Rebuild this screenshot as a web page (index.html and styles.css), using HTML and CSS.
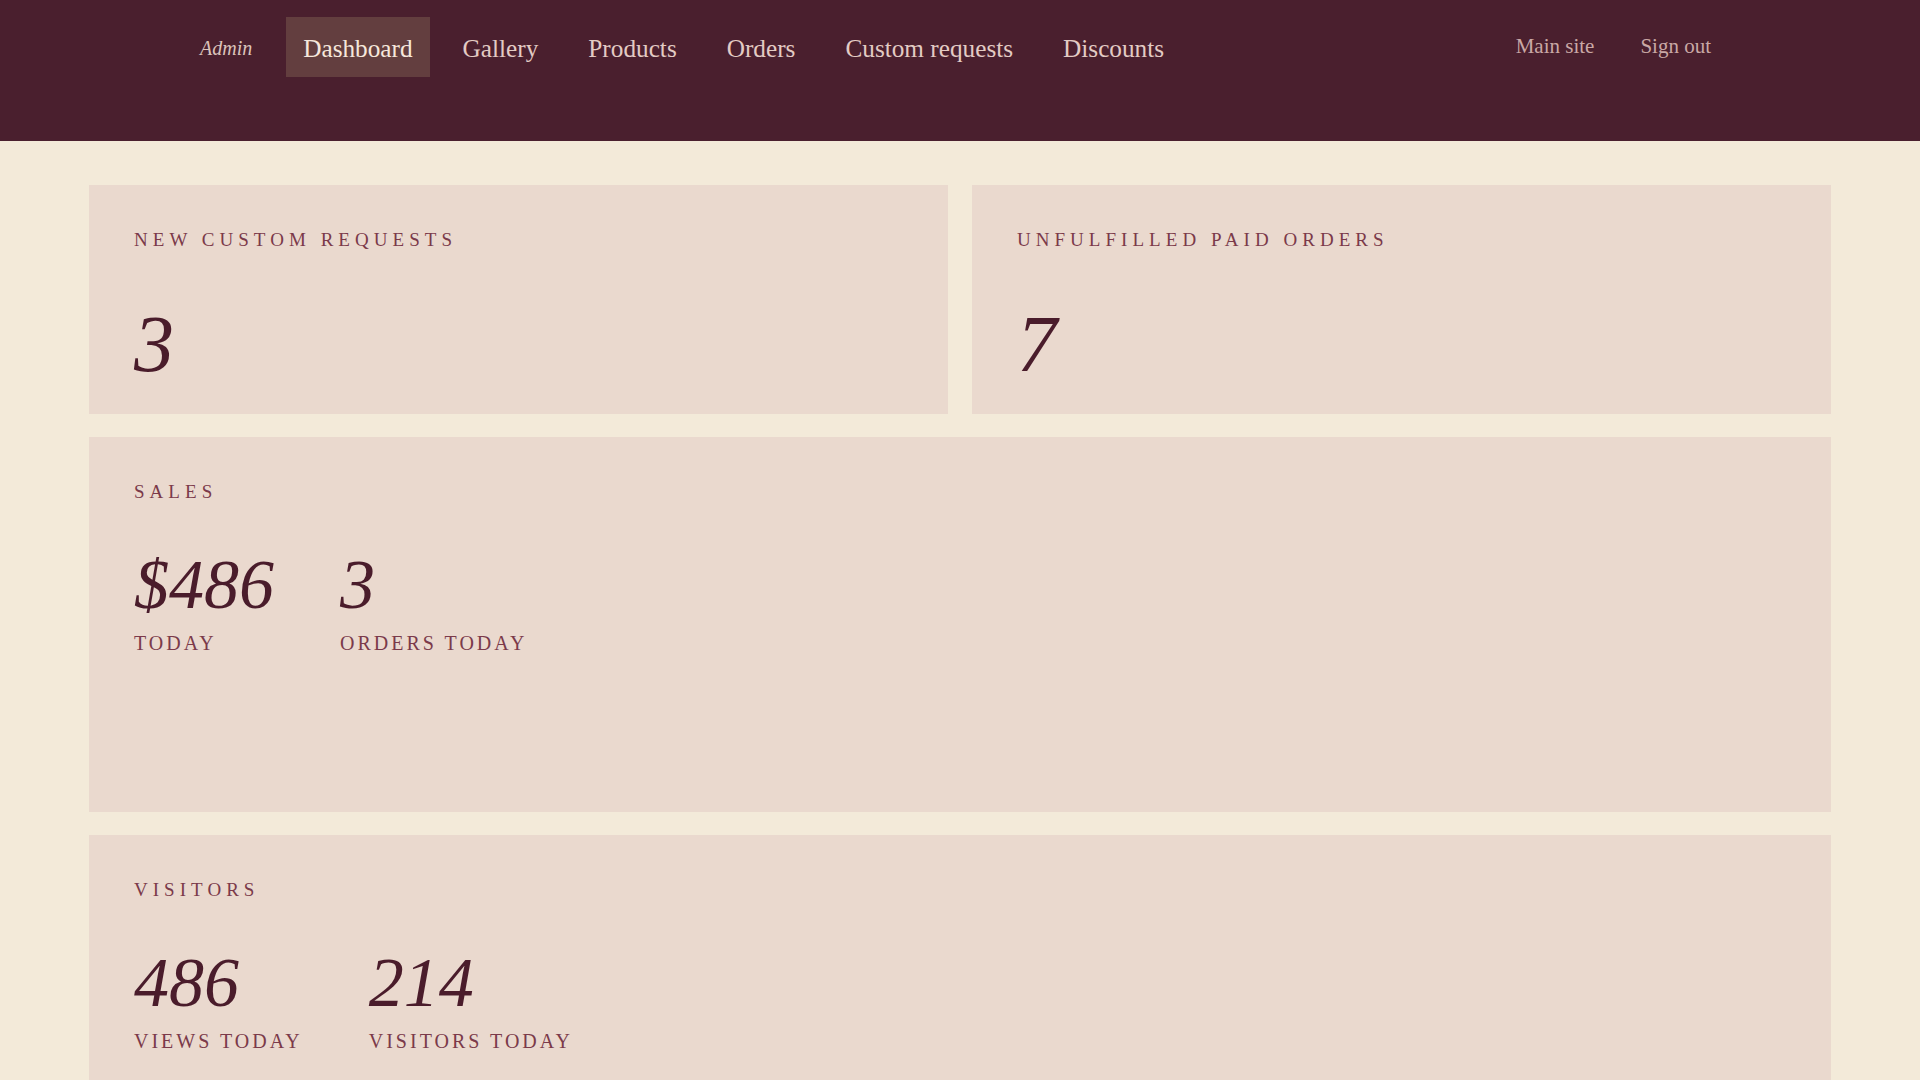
FILE: index.html
```html
<!DOCTYPE html>
<html lang="en">
<head>
<meta charset="utf-8">
<title>Admin · Dashboard</title>
<link rel="stylesheet" href="styles.css">
</head>
<body>
<header class="topbar">
  <nav class="topbar-inner">
    <div class="nav-main">
      <span class="brand">Admin</span>
      <a class="nav-link is-active" href="#">Dashboard</a>
      <a class="nav-link" href="#">Gallery</a>
      <a class="nav-link" href="#">Products</a>
      <a class="nav-link" href="#">Orders</a>
      <a class="nav-link" href="#">Custom requests</a>
      <a class="nav-link" href="#">Discounts</a>
    </div>
    <div class="nav-aux">
      <a class="aux-link" href="#">Main site</a>
      <a class="aux-link" href="#">Sign out</a>
    </div>
  </nav>
</header>

<main class="dashboard">
  <div class="row-pair">
    <section class="card card-count">
      <h2 class="card-title">New custom requests</h2>
      <div class="count">3</div>
    </section>
    <section class="card card-count">
      <h2 class="card-title">Unfulfilled paid orders</h2>
      <div class="count">7</div>
    </section>
  </div>

  <section class="card card-stats">
    <h2 class="card-title">Sales</h2>
    <div class="stats">
      <div class="stat">
        <div class="stat-value">$486</div>
        <div class="stat-label">Today</div>
      </div>
      <div class="stat">
        <div class="stat-value">3</div>
        <div class="stat-label">Orders today</div>
      </div>
    </div>
  </section>

  <section class="card card-stats">
    <h2 class="card-title">Visitors</h2>
    <div class="stats">
      <div class="stat">
        <div class="stat-value">486</div>
        <div class="stat-label">Views today</div>
      </div>
      <div class="stat">
        <div class="stat-value">214</div>
        <div class="stat-label">Visitors today</div>
      </div>
    </div>
  </section>
</main>
</body>
</html>
```

FILE: styles.css
```css
* {
  box-sizing: border-box;
}

html,
body {
  margin: 0;
  padding: 0;
}

body {
  background: #f3ead9;
  font-family: "Liberation Serif", "Times New Roman", serif;
  color: #4a1c2b;
}

a {
  text-decoration: none;
}

/* ---------- top bar ---------- */

.topbar {
  background: #4a1f2e;
  height: 141px;
  padding: 17px 209px 0 200px;
}

.topbar-inner {
  display: flex;
  justify-content: space-between;
  align-items: flex-start;
}

.nav-main {
  display: flex;
  align-items: center;
  gap: 16px;
}

.brand {
  font-style: italic;
  font-size: 20px;
  color: #dcc3bb;
  margin-right: 18px;
  padding-top: 3px;
}

.nav-link {
  display: block;
  font-size: 25.25px;
  line-height: 60px;
  height: 60px;
  padding: 1px 17px 0;
  color: #e3cbc4;
}

.nav-link.is-active {
  background: #633e3f;
  color: #f6e7dc;
}

.nav-aux {
  display: flex;
  gap: 46px;
  padding-top: 17px;
}

.aux-link {
  font-size: 21px;
  line-height: 24px;
  color: #c9a8a5;
}

/* ---------- dashboard ---------- */

.dashboard {
  padding: 44px 89px 0;
  display: flex;
  flex-direction: column;
  gap: 23px;
}

.row-pair {
  display: grid;
  grid-template-columns: 1fr 1fr;
  gap: 24px;
}

.card {
  background: #ead9ce;
  padding: 43px 45px 0;
}

.card-count {
  height: 229px;
}

.card-stats {
  height: 375px;
}

.card-title {
  margin: 0;
  font-weight: normal;
  font-size: 19px;
  line-height: 23px;
  letter-spacing: 0.265em;
  text-transform: uppercase;
  color: #7b3a4a;
}

.count {
  margin-top: 53px;
  font-style: italic;
  font-size: 80px;
  line-height: 80px;
  color: #4a1c2b;
}

.stats {
  display: flex;
  gap: 66px;
  margin-top: 48px;
}

.stat-value {
  font-style: italic;
  font-size: 70px;
  line-height: 68px;
  color: #4a1c2b;
}

.stat-label {
  margin-top: 12px;
  font-size: 20px;
  line-height: 24px;
  letter-spacing: 3px;
  text-transform: uppercase;
  color: #7b3a4a;
}
```
